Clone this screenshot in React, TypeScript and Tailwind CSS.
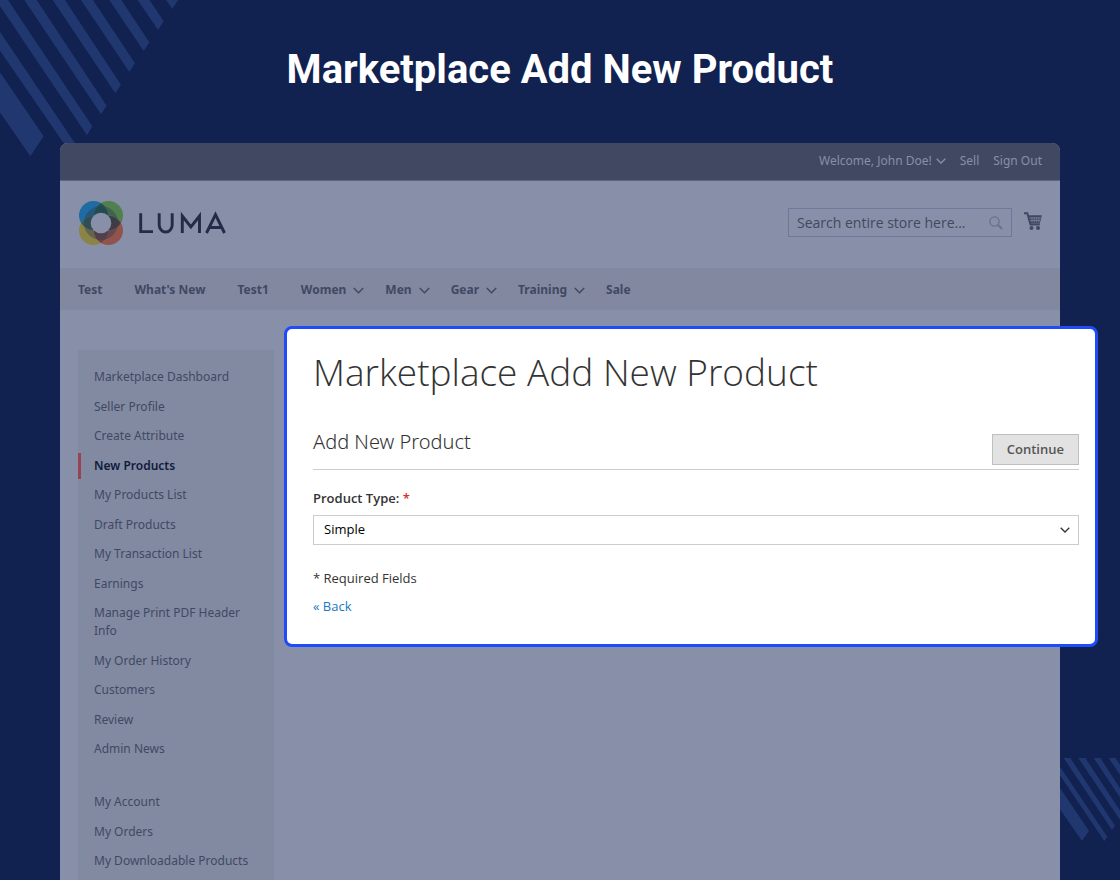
import React from "react";

const NAV = [
  { label: "Test", menu: false },
  { label: "What's New", menu: false },
  { label: "Test1", menu: false },
  { label: "Women", menu: true },
  { label: "Men", menu: true },
  { label: "Gear", menu: true },
  { label: "Training", menu: true },
  { label: "Sale", menu: false },
];

const SELLER_LINKS = [
  "Marketplace Dashboard",
  "Seller Profile",
  "Create Attribute",
  "New Products",
  "My Products List",
  "Draft Products",
  "My Transaction List",
  "Earnings",
  "Manage Print PDF Header Info",
  "My Order History",
  "Customers",
  "Review",
  "Admin News",
];

const ACCOUNT_LINKS = ["My Account", "My Orders", "My Downloadable Products"];

function Chevron({ className }: { className: string }) {
  return (
    <svg viewBox="0 0 10 6" fill="none" stroke="currentColor" className={className} aria-hidden="true">
      <path d="M0.7 0.8 5 5 9.3 0.8" strokeWidth="1.3" />
    </svg>
  );
}

function TopStripes() {
  return (
    <svg viewBox="0 0 540 480" className="absolute left-0 top-0 h-40 w-[180px]" fill="#21376f" aria-hidden="true">
      <path d="M0 337V217L131 409 91 469Z" />
      <path d="M0 152V95L234 443 218 469Z" />
      <path d="M0 18V0H24L277 379 261 406Z" />
      <path d="M73 0H110L320 317 303 343Z" />
      <path d="M158 0H195L363 254 346 280Z" />
      <path d="M243 0H279L405 190 388 216Z" />
      <path d="M328 0H364L448 127 431 153Z" />
      <path d="M413 0H449L491 64 474 90Z" />
      <path d="M498 0H534L517 27Z" />
    </svg>
  );
}

function BottomStripes() {
  return (
    <svg viewBox="180 414 180 252" className="absolute right-0 top-[758px] h-[84px] w-[60px]" fill="#21376f" aria-hidden="true">
      <path d="M180 568V504L267 632 246 663Z" />
      <path d="M180 466V440L322 650 313 663Z" />
      <path d="M191 414H211L345 617 336 630Z" />
      <path d="M235 414H256L368 584 358 597Z" />
      <path d="M281 414H301L390 551 381 564Z" />
      <path d="M326 414H347L413 516 404 530Z" />
    </svg>
  );
}

function LumaLogo() {
  return (
    <a href="#" aria-label="Luma" className="block">
      <svg viewBox="0 0 148 46" className="h-[46px] w-[148px]" aria-hidden="true">
        <circle cx="15.500" cy="15.500" r="14.500" fill="#1f6ca3" />
        <circle cx="30.500" cy="15.500" r="14.500" fill="#50804f" />
        <circle cx="15.500" cy="30.500" r="14.500" fill="#8b8447" />
        <circle cx="30.500" cy="30.500" r="14.500" fill="#91544d" />
        <path d="M23 3.100a14.500 14.500 0 0 1 0 24.800a14.500 14.500 0 0 1 0-24.800Z" fill="#1f5550" />
        <path d="M3.100 23a14.500 14.500 0 0 1 24.800 0a14.500 14.500 0 0 1-24.800 0Z" fill="#355b5b" />
        <path d="M18.100 23a14.500 14.500 0 0 1 24.800 0a14.500 14.500 0 0 1-24.800 0Z" fill="#493b42" />
        <path d="M23 18.100a14.500 14.500 0 0 1 0 24.800a14.500 14.500 0 0 1 0-24.800Z" fill="#704248" />
        <circle cx="23" cy="23" r="13.600" fill="none" stroke="#2a3c52" strokeWidth="7" strokeOpacity="0.42" />
        <circle cx="23" cy="23" r="10.300" fill="#888fa9" />
        <g fill="none" stroke="#242b49" strokeWidth="2.900">
          <path d="M62.700 13.300V31.600H75" />
          <path d="M81.200 13.300V25a6.500 7 0 0 0 13 0V13.300" />
          <path d="M104.300 33V16L112.900 27 121.500 16V33" />
          <path d="M128.500 33 137.500 14.500 146.500 33M132 27.500H143" />
        </g>
      </svg>
    </a>
  );
}

function CartIcon() {
  return (
    <svg viewBox="0 0 18 18" className="h-[18px] w-[18px]" fill="none" stroke="#404961" aria-hidden="true">
      <path d="M0 1.200H3.300L6.500 12.600H15.800" strokeWidth="2" />
      <path d="M3.800 3.300H17.900L15.800 11.500H6Z" fill="#404961" stroke="none" />
      <path d="M5 6H17M6 8.500H16M8 5V10.500M10.300 5V10.500M12.600 5V10.500M14.900 5V10.500" stroke="#888fa9" strokeWidth="0.600" />
      <circle cx="7.500" cy="16" r="2" fill="#404961" stroke="none" />
      <circle cx="14" cy="16" r="2" fill="#404961" stroke="none" />
    </svg>
  );
}

function SideLink({ label }: { label: string }) {
  const active = label === "New Products";
  return (
    <li className={active ? "border-l-3 border-[#964452] pl-[13px]" : "pl-4"}>
      <a
        href="#"
        aria-current={active ? "page" : undefined}
        className={active ? "block py-1 pr-4 font-semibold text-[#101c3c]" : "block py-1 pr-4"}
      >
        {label}
      </a>
    </li>
  );
}

export default function App() {
  return (
    <div className="relative flex min-h-screen flex-col overflow-hidden bg-[#112150] font-['Noto_Sans',sans-serif] text-xs leading-[18px]">
      <TopStripes />
      <BottomStripes />
      <h1 className="relative pt-[46px] text-center font-['Roboto',sans-serif] text-[40px] font-bold leading-12 text-white">
        Marketplace Add New Product
      </h1>

      <div className="relative mx-[60px] mt-[49px] flex flex-1 flex-col rounded-t-lg bg-[#888fa9] text-[#404961]">
        <div className="flex h-[38px] items-center justify-end gap-[14px] rounded-t-lg border-b border-[#5d667f] bg-[#404961] pb-[2px] pr-[18px] text-[#888fa9]">
          <button type="button" className="flex items-center gap-1">
            Welcome, John Doe!
            <Chevron className="h-[6px] w-[10px]" />
          </button>
          <a href="#">Sell</a>
          <a href="#">Sign Out</a>
        </div>

        <header className="flex h-[87px] items-center justify-between pb-1 pl-[18px] pr-[18px]">
          <LumaLogo />
          <div className="flex items-center gap-3">
            <div className="flex h-[29px] w-56 items-center border border-[#70779a] px-2 font-['Open_Sans',sans-serif]">
              <input
                type="text"
                aria-label="Search"
                placeholder="Search entire store here..."
                className="min-w-0 flex-1 bg-transparent text-sm outline-none placeholder:text-[#404961]"
              />
              <button type="button" aria-label="Search">
                <svg viewBox="0 0 14 14" className="h-[14px] w-[14px]" fill="none" stroke="#6a7290" strokeWidth="1.400" aria-hidden="true">
                  <circle cx="5.500" cy="5.500" r="4.600" />
                  <path d="M8.800 8.800 13 13" strokeWidth="2" />
                </svg>
              </button>
            </div>
            <a href="#" aria-label="Cart" className="pb-1">
              <CartIcon />
            </a>
          </div>
        </header>

        <nav className="flex h-[42px] items-center gap-8 bg-[#8188a0] pl-[18px] pt-[2px] font-bold">
          {NAV.map((item) => (
            <a key={item.label} href="#" className={item.menu ? "-mr-[11px] flex items-center gap-[7px]" : "flex"}>
              {item.label}
              {item.menu && <Chevron className="h-[7px] w-[11px]" />}
            </a>
          ))}
        </nav>

        <div className="flex flex-1 items-start gap-[10px] pl-[18px]">
          <aside className="mt-10 w-[196px] shrink-0 self-stretch bg-[#828aa2] pt-[14px]">
            <ul className="flex h-[398px] flex-col justify-between">
              {SELLER_LINKS.map((label) => (
                <SideLink key={label} label={label} />
              ))}
            </ul>
            <ul className="mt-[27px] flex h-[85px] flex-col justify-between">
              {ACCOUNT_LINKS.map((label) => (
                <SideLink key={label} label={label} />
              ))}
            </ul>
          </aside>

          <main className="-mr-[38px] mt-4 h-[321px] min-w-0 flex-1 rounded-lg border-3 border-[#1f4bfb] bg-white pl-[26px] pr-4 font-['Open_Sans',sans-serif] text-[13px] text-[#333333]">
            <h2 className="pt-[19px] text-[37px] font-light leading-12">Marketplace Add New Product</h2>
            <div className="mt-[38px] flex h-[36px] items-start justify-between border-b border-[#cccccc]">
              <h3 className="font-['Noto_Sans',sans-serif] text-xl font-light leading-4">Add New Product</h3>
              <button type="button" className="h-[31px] border border-[#bfbfbf] bg-[#e2e2e2] px-[14px] pb-[2px] font-semibold text-[#555555]">
                Continue
              </button>
            </div>
            <label htmlFor="product-type" className="mt-[19px] block font-semibold">
              Product Type: <span className="text-[#e02b27]">*</span>
            </label>
            <div className="mt-2 grid items-center">
              <select
                id="product-type"
                className="col-start-1 row-start-1 h-[30px] w-full appearance-none border border-[#cccccc] bg-white px-[10px] pb-[2px] text-black"
              >
                <option>Simple</option>
              </select>
              <Chevron className="pointer-events-none col-start-1 row-start-1 mr-[9px] h-[6px] w-[10px] justify-self-end" />
            </div>
            <p className="mt-6">* Required Fields</p>
            <a href="#" className="mt-[10px] inline-block text-[#1979c3]">
              « Back
            </a>
          </main>
        </div>
      </div>
    </div>
  );
}
